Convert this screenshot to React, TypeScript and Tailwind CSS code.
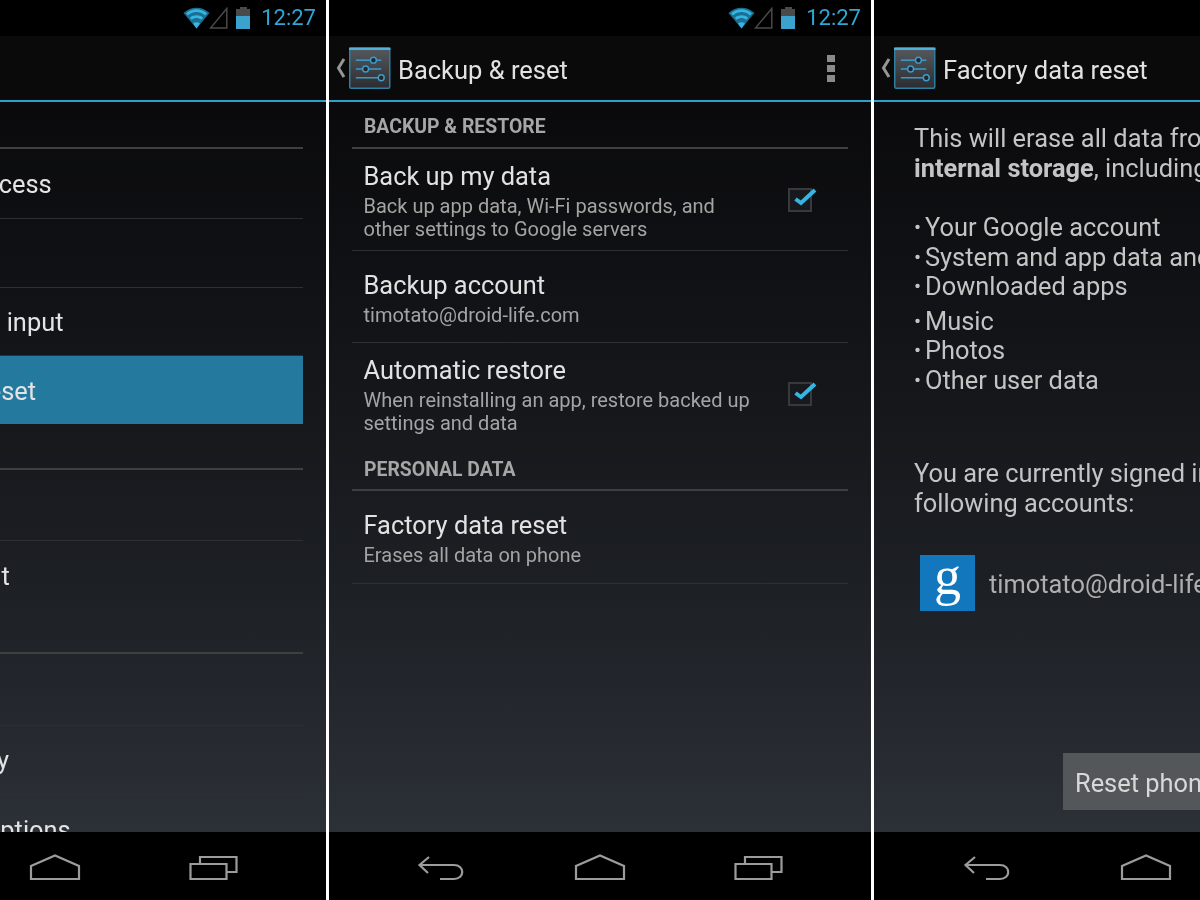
import React from "react";

const font = { fontFamily: "Roboto, 'Noto Sans', sans-serif" };

function Wifi() {
  return (
    <svg width="27" height="22" viewBox="0 0 27 22" className="shrink-0">
      <path d="M13.5 21.5 L0.5 6 C8 -1 19 -1 26.5 6 Z" fill="#1d6f90" />
      <path d="M3 6.2 C9.5 1 17.5 1 24 6.2 L22 8.4 C16.5 4 10.5 4 5 8.4 Z" fill="#33b5e5" />
      <path d="M6.8 10.6 C11 7.4 16 7.4 20.2 10.6 L18.4 12.8 C15 10.4 12 10.4 8.6 12.8 Z" fill="#33b5e5" />
      <path d="M13.5 21.5 L10 16.4 C12 15 15 15 17 16.4 Z" fill="#33b5e5" />
    </svg>
  );
}

function StatusBar({ right = "pr-[10px]" }: { right?: string }) {
  return (
    <div className={`flex h-[36px] shrink-0 items-center justify-end bg-black ${right}`}>
      <div className="flex items-center">
        <Wifi />
        <svg width="19" height="22" viewBox="0 0 19 22" className="ml-[-1px]">
          <path d="M17.8 1.5 V21 H1.5 Z" fill="none" stroke="#4a4a4a" strokeWidth="1.5" />
        </svg>
        <div className="ml-[8px] flex h-[22px] w-[14px] flex-col items-center">
          <div className="h-[2px] w-[7px] bg-[#4a4a4a]" />
          <div className="h-[7px] w-[14px] bg-[#4a4a4a]" />
          <div className="h-[13px] w-[14px] bg-[#3aa2cd]" />
        </div>
        <span className="ml-[11px] text-[22px] leading-[28px] text-[#2fa6d4]">12:27</span>
      </div>
    </div>
  );
}

function SettingsIcon() {
  return (
    <svg width="42" height="43" viewBox="0 0 43 43" className="shrink-0">
      <defs>
        <linearGradient id="tile" x1="0" y1="0" x2="0" y2="1">
          <stop offset="0" stopColor="#55595e" />
          <stop offset="1" stopColor="#2a2d31" />
        </linearGradient>
      </defs>
      <rect x="0.75" y="0.75" width="41" height="41" rx="1.5" fill="url(#tile)" stroke="#2f7fa3" strokeWidth="1.5" />
      <rect x="0" y="0" width="42.5" height="2.5" fill="#4fb3dc" />
      <g stroke="#3f9ccb" strokeWidth="1.5" fill="none">
        <path d="M7 13 H33" />
        <path d="M7 22 H33" />
        <path d="M7 31 H35" />
        <circle cx="25" cy="13" r="3" fill="#23262a" />
        <circle cx="17" cy="22" r="3" fill="#23262a" />
        <circle cx="33" cy="31" r="3" fill="#23262a" />
      </g>
    </svg>
  );
}

function ActionBar({ title, menu }: { title: string; menu?: boolean }) {
  return (
    <div className="flex h-[64px] shrink-0 items-center bg-[#0a0a0b] pl-[7px] pr-[36px]">
      <svg width="10" height="22" viewBox="0 0 10 22" className="mr-[3px] shrink-0">
        <path d="M8 2 L2.5 11 L8 20" fill="none" stroke="#969696" strokeWidth="3" />
      </svg>
      <SettingsIcon />
      <span className="ml-[7px] pt-[4px] text-[25.5px] leading-[30px] text-[#e2e2e2]">{title}</span>
      {menu && (
        <div className="ml-auto flex flex-col gap-[3px]">
          <div className="h-[7px] w-[8px] bg-[#8a8a8a]" />
          <div className="h-[7px] w-[8px] bg-[#8a8a8a]" />
          <div className="h-[7px] w-[8px] bg-[#8a8a8a]" />
        </div>
      )}
    </div>
  );
}

function BlueLine() {
  return <div className="h-[2px] shrink-0 bg-[#2f9fc9]" />;
}

function NavBar() {
  const stroke = "#9c9c9c";
  return (
    <div className="flex h-[68px] shrink-0 items-start justify-center bg-black pt-[22px]">
      <div className="flex w-[158px] justify-center">
        <svg width="50" height="28" viewBox="0 0 50 28">
          <path d="M12 3 L2.5 11 L11 19 M3 11 H37 C48 11 48 25 37 25 H23" fill="none" stroke={stroke} strokeWidth="2.2" />
        </svg>
      </div>
      <div className="flex w-[158px] justify-center">
        <svg width="52" height="28" viewBox="0 0 52 28">
          <path d="M2 25 V12 L26 1.5 L50 12 V25 Z" fill="none" stroke={stroke} strokeWidth="2.2" />
        </svg>
      </div>
      <div className="flex w-[158px] justify-center">
        <svg width="50" height="28" viewBox="0 0 50 28">
          <path d="M2.5 10 H38.5 V25 H2.5 Z" fill="none" stroke={stroke} strokeWidth="2.2" />
          <path d="M12 9 V3 H48.5 V18 H39" fill="none" stroke={stroke} strokeWidth="2.2" />
        </svg>
      </div>
    </div>
  );
}

function Section({ label, h = "h-[47px]", pb = "pb-[9px]" }: { label: string; h?: string; pb?: string }) {
  return (
    <div className={`flex ${h} shrink-0 flex-col justify-end`}>
      <div className={`px-[12px] ${pb} text-[19.4px] font-bold leading-[23px] text-[#a6a6a6]`}>{label}</div>
      <div className="h-[2px] bg-[#3e3f41]" />
    </div>
  );
}

function Check() {
  return (
    <div className="relative mr-[36px] h-[24px] w-[24px] shrink-0 border-2 border-[#37393c] bg-[#17191c]">
      <svg width="26" height="22" viewBox="0 0 26 22" className="absolute left-[2px] top-[-3px]">
        <path d="M3.5 12 L9 16 L23 3" fill="none" stroke="#33b5e5" strokeWidth="4" />
      </svg>
    </div>
  );
}

function DetailRow({
  title,
  lines,
  pt,
  h,
  check,
  line = true,
}: {
  title: string;
  lines: string[];
  pt: string;
  h: string;
  check?: boolean;
  line?: boolean;
}) {
  return (
    <div className={`flex ${h} shrink-0 items-center justify-between border-[#2d2f32] ${line ? "border-b" : ""}`}>
      <div className={`self-start pl-[11.5px] pr-[12px] ${pt}`}>
        <div className="text-[25.4px] leading-[30px] text-[#e2e2e2]">{title}</div>
        <div className="mt-[4px] text-[20px] leading-[23px] text-[#a4a4a4]">
          {lines.map((l) => (
            <div key={l}>{l}</div>
          ))}
        </div>
      </div>
      {check && <Check />}
    </div>
  );
}

function MenuRow({ label, h, line = true, active }: { label: string; h: string; line?: boolean; active?: boolean }) {
  return (
    <div
      className={`flex ${h} shrink-0 items-center whitespace-nowrap pl-[61px] text-[25.4px] leading-[30px] text-[#e4e4e4] ${
        line ? "border-b border-[#2d2f32]" : ""
      } ${active ? "bg-[#237a9e] pt-[2px]" : ""}`}
    >
      {label}
    </div>
  );
}

function Panel({ w, children }: { w: string; children: React.ReactNode }) {
  return <div className={`flex h-[900px] ${w} shrink-0 flex-col overflow-hidden`}>{children}</div>;
}

function Body({ children }: { children: React.ReactNode }) {
  return (
    <div className="min-h-0 flex-1 overflow-hidden bg-gradient-to-b from-[#0a0a0c] via-[#1c1f24] via-65% to-[#2c3137]">
      {children}
    </div>
  );
}

function Divider() {
  return <div className="h-[900px] w-[3px] shrink-0 bg-white" />;
}

function Bullet({ children, className = "" }: { children: React.ReactNode; className?: string }) {
  return (
    <div className={`flex ${className}`}>
      <span className="w-[11px] shrink-0 text-[21px]">•</span>
      <span>{children}</span>
    </div>
  );
}

export default function App() {
  return (
    <div className="h-[900px] w-[1200px] overflow-hidden bg-black blur-[0.4px]" style={font}>
      <div className="ml-[-217px] flex w-[1632px]">
        <Panel w="w-[543px]">
          <StatusBar />
          <div className="h-[64px] shrink-0 bg-[#0a0a0b]" />
          <BlueLine />
          <Body>
            <div className="mx-[23px] flex flex-col">
              <Section label="PERSONAL" />
              <MenuRow label="Location access" h="h-[70px]" />
              <MenuRow label="Security" h="h-[69px]" />
              <MenuRow label="Language & input" h="h-[68px]" />
              <MenuRow label="Backup & reset" h="h-[68px]" line={false} active />
              <Section label="ACCOUNTS" h="h-[46px]" />
              <MenuRow label="Google" h="h-[71px]" />
              <MenuRow label="Add account" h="h-[69px]" line={false} />
              <Section label="SYSTEM" h="h-[44px]" />
              <MenuRow label="Date & time" h="h-[72px]" />
              <MenuRow label="Accessibility" h="h-[69px]" />
              <MenuRow label="Developer options" h="h-[69px]" line={false} />
            </div>
          </Body>
          <NavBar />
        </Panel>
        <Divider />
        <Panel w="w-[542px]">
          <StatusBar />
          <ActionBar title="Backup & reset" menu />
          <BlueLine />
          <Body>
            <div className="mx-[23px] flex flex-col">
              <Section label="BACKUP & RESTORE" />
              <DetailRow
                title="Back up my data"
                lines={["Back up app data, Wi-Fi passwords, and", "other settings to Google servers"]}
                pt="pt-[12px]"
                h="h-[102px]"
                check
              />
              <DetailRow title="Backup account" lines={["timotato@droid-life.com"]} pt="pt-[19px]" h="h-[92px]" />
              <DetailRow
                title="Automatic restore"
                lines={["When reinstalling an app, restore backed up", "settings and data"]}
                pt="pt-[12px]"
                h="h-[102px]"
                check
                line={false}
              />
              <Section label="PERSONAL DATA" h="h-[46px]" pb="pb-[8px]" />
              <DetailRow title="Factory data reset" lines={["Erases all data on phone"]} pt="pt-[19px]" h="h-[93px]" />
            </div>
          </Body>
          <NavBar />
        </Panel>
        <Divider />
        <Panel w="w-[543px]">
          <StatusBar />
          <ActionBar title="Factory data reset" />
          <BlueLine />
          <Body>
            <div className="flex h-full flex-col pl-[40px] text-[25.4px] leading-[29.5px] text-[#c4c4c4]">
              <div className="mt-[22px]">
                <div className="whitespace-nowrap">This will erase all data from your phone's</div>
                <div className="whitespace-nowrap">
                  <span className="font-bold">internal storage</span>, including:
                </div>
              </div>
              <div className="mt-[30px] whitespace-nowrap">
                <Bullet>Your Google account</Bullet>
                <Bullet>System and app data and settings</Bullet>
                <Bullet>Downloaded apps</Bullet>
                <Bullet className="mt-[5px]">Music</Bullet>
                <Bullet>Photos</Bullet>
                <Bullet>Other user data</Bullet>
              </div>
              <div className="mt-[64px] whitespace-nowrap">
                <div>You are currently signed into the</div>
                <div>following accounts:</div>
              </div>
              <div className="ml-[6px] mt-[37px] flex items-center">
                <div
                  className="flex h-[56px] w-[55px] shrink-0 items-center justify-center bg-[#1277bd] pb-[14px] text-[54px] font-normal leading-[56px] text-white"
                  style={{ fontFamily: "'Liberation Serif', serif" }}
                >
                  g
                </div>
                <span className="ml-[14px] whitespace-nowrap pt-[4px] text-[#aeaeae]">timotato@droid-life.com</span>
              </div>
              <div className="mb-[22px] ml-[149px] mt-auto flex h-[57px] w-[200px] items-center bg-[#54575a] pl-[12px] pt-[4px] text-[#d8d8d8]">
                Reset phone
              </div>
            </div>
          </Body>
          <NavBar />
        </Panel>
      </div>
    </div>
  );
}
